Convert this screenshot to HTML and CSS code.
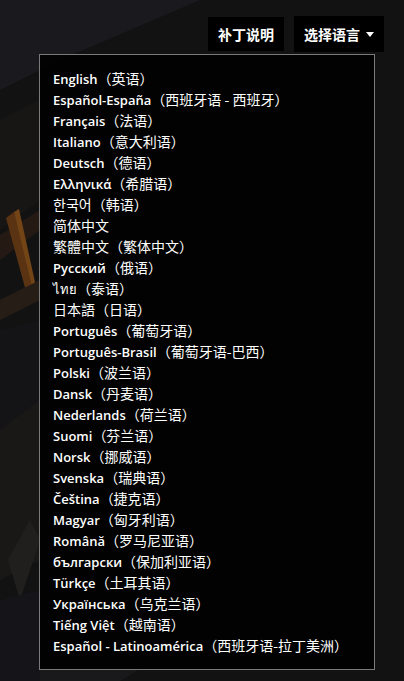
FILE: index.html
```html
<!DOCTYPE html>
<html lang="zh-CN">
<head>
    <meta charset="UTF-8">
    <meta name="viewport" content="width=device-width, initial-scale=1.0">
    <title>选择语言</title>
    <link rel="stylesheet" href="styles.css">
</head>
<body>
    <!-- fond peint, derriere tout le reste -->
    <svg class="backdrop" width="404" height="681" viewBox="0 0 404 681">
        <polygon points="0,0 200,0 130,30 60,60 0,90" fill="#1a191d"/>
        <polygon points="0,120 40,100 40,200 0,230" fill="#181615"/>
        <polygon points="0,235 40,210 40,230 0,260" fill="#241a13"/>
        <polygon points="6,218 14,212 35,290 27,295" fill="#5a3412"/>
        <polygon points="14,212 19,209 35,282 33,290" fill="#734516"/>
        <polygon points="0,300 40,280 40,300 0,320" fill="#261d17"/>
        <polygon points="0,330 40,320 40,430 0,430" fill="#141416"/>
        <polygon points="0,430 40,400 40,560 0,580" fill="#1a1817"/>
        <polygon points="8,560 30,520 40,540 20,600" fill="#211f1d"/>
        <polygon points="0,600 40,590 40,681 0,681" fill="#151419"/>
        <polygon points="40,669 140,669 120,681 40,681" fill="#19181b"/>
    </svg>

    <div class="page">
        <div class="toolbar">
            <a class="tool-btn" href="#">补丁说明</a>
            <a class="tool-btn" href="#">选择语言<span class="caret"></span></a>
        </div>

        <ul class="lang-list">
            <li>English<span class="zh">（英语）</span></li>
            <li>Español-España<span class="zh">（西班牙语 - 西班牙）</span></li>
            <li>Français<span class="zh">（法语）</span></li>
            <li>Italiano<span class="zh">（意大利语）</span></li>
            <li>Deutsch<span class="zh">（德语）</span></li>
            <li>Ελληνικά<span class="zh">（希腊语）</span></li>
            <li><span class="zh">한국어（韩语）</span></li>
            <li><span class="zh">简体中文</span></li>
            <li><span class="zh">繁體中文（繁体中文）</span></li>
            <li>Русский<span class="zh">（俄语）</span></li>
            <li><span class="thai">ไทย</span><span class="zh">（泰语）</span></li>
            <li><span class="zh">日本語（日语）</span></li>
            <li>Português<span class="zh">（葡萄牙语）</span></li>
            <li>Português-Brasil<span class="zh">（葡萄牙语-巴西）</span></li>
            <li>Polski<span class="zh">（波兰语）</span></li>
            <li>Dansk<span class="zh">（丹麦语）</span></li>
            <li>Nederlands<span class="zh">（荷兰语）</span></li>
            <li>Suomi<span class="zh">（芬兰语）</span></li>
            <li>Norsk<span class="zh">（挪威语）</span></li>
            <li>Svenska<span class="zh">（瑞典语）</span></li>
            <li>Čeština<span class="zh">（捷克语）</span></li>
            <li>Magyar<span class="zh">（匈牙利语）</span></li>
            <li>Română<span class="zh">（罗马尼亚语）</span></li>
            <li>български<span class="zh">（保加利亚语）</span></li>
            <li>Türkçe<span class="zh">（土耳其语）</span></li>
            <li>Українська<span class="zh">（乌克兰语）</span></li>
            <li>Tiếng Việt<span class="zh">（越南语）</span></li>
            <li>Español - Latinoamérica<span class="zh">（西班牙语-拉丁美洲）</span></li>
        </ul>
    </div>
</body>
</html>
```

FILE: styles.css
```css
html, body {
    margin: 0;
    padding: 0;
}
body {
    width: 404px;
    height: 681px;
    overflow: hidden;
    background-color: #121212;
    color: #fff;
    font-family: "Open Sans", "Noto Sans CJK SC", sans-serif;
    position: relative;
}
.backdrop {
    position: absolute;
    left: 0;
    top: 0;
}
.page {
    position: relative;
    padding: 17px 20px 0 39px;
}
.toolbar {
    display: flex;
    justify-content: flex-end;
    gap: 10px;
    height: 37px;
}
.tool-btn {
    display: flex;
    align-items: center;
    height: 34px;
    padding: 0 10px;
    background: #000;
    color: #fff;
    text-decoration: none;
    font-family: "Noto Sans CJK SC", sans-serif;
    font-size: 14px;
    font-weight: bold;
}
.tool-btn:last-child {
    margin-top: -1px;
    height: 36px;
}
.caret {
    width: 0;
    height: 0;
    margin-left: 6px;
    border-left: 4px solid transparent;
    border-right: 4px solid transparent;
    border-top: 5px solid #fff;
}
.lang-list {
    list-style: none;
    width: 321px;
    margin: 0;
    padding: 13px 0 13px 13px;
    border: 1px solid #7a7a7a;
    background: rgba(2, 2, 2, 0.95);
}
.lang-list li {
    font-size: 13px;
    font-weight: 600;
    line-height: 21px;
    height: 21px;
    white-space: nowrap;
}
.zh {
    font-family: "Noto Sans CJK SC", sans-serif;
    font-size: 14px;
    font-weight: normal;
}
.thai {
    font-weight: normal;
}
```
